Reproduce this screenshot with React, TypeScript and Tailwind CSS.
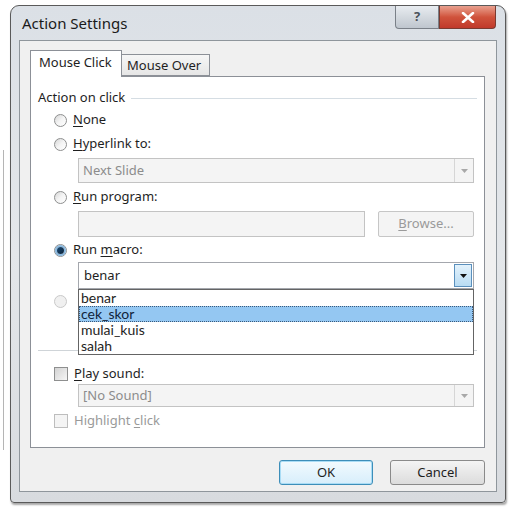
import React from "react";

function Radio({ checked = false, faded = false }: { checked?: boolean; faded?: boolean }) {
  return (
    <span
      className={
        "w-[13px] h-[13px] rounded-full border flex items-center justify-center shrink-0 " +
        (faded
          ? "border-[#c9c9c9] bg-[#f0f0f0]"
          : "border-[#8e8f8f] bg-gradient-to-br from-[#d6d6d6] via-[#f4f4f4] to-[#ffffff]")
      }
    >
      {checked && (
        <span className="w-[7px] h-[7px] rounded-full bg-gradient-to-br from-[#1a4c78] to-[#0b2238] ring-2 ring-[#8ab8de]" />
      )}
    </span>
  );
}

function Check({ disabled = false }: { disabled?: boolean }) {
  return (
    <span
      className={
        "w-[14px] h-[14px] border shrink-0 " +
        (disabled
          ? "border-[#bdbdbd] bg-[#f4f4f4]"
          : "border-[#8e8f8f] bg-gradient-to-br from-[#d3d3d3] to-[#f6f6f6]")
      }
    />
  );
}

function U({ children }: { children: React.ReactNode }) {
  return <span className="underline underline-offset-2">{children}</span>;
}

function DisabledCombo({ text, h }: { text: string; h: string }) {
  return (
    <div className={"ml-[47px] mr-[10px] flex border border-[#c3c3c3] bg-[#f4f4f4] " + h}>
      <span className="flex-1 flex items-center pl-[4px] text-[#8c8c8c]">{text}</span>
      <span className="w-[19px] border-l border-[#d6d6d6] flex items-center justify-center">
        <svg width="7" height="4" viewBox="0 0 7 4">
          <path d="M0 0 L7 0 L3.5 4 Z" fill="#a8a8a8" />
        </svg>
      </span>
    </div>
  );
}

export default function App() {
  const items = ["benar", "cek_skor", "mulai_kuis", "salah"];
  return (
    <div
      className="w-[511px] h-[512px] bg-white relative pt-[5px] pl-[10px] text-[13px] text-[#1e1e1e]"
      style={{ fontFamily: '"Noto Sans", "Open Sans", sans-serif' }}
    >
      {/* faint background edge */}
      <div className="absolute left-[3px] top-[150px] w-px h-[300px] bg-[#b5b5b5]" />

      <div className="w-[496px] h-[498px] rounded-t-[9px] rounded-b-[4px] border border-[#5a5a5a] bg-gradient-to-b from-[#dbe0e6] via-[#e4e7ea] to-[#d8dbdf] shadow-[1px_2px_2px_rgba(0,0,0,0.35)] flex flex-col">
        {/* title bar */}
        <div className="h-[34px] flex items-start shrink-0">
          <span className="pl-[11px] pt-[10px] text-[15px] text-[#1a1a1a] leading-none">Action Settings</span>
          <div className="ml-auto mr-[9px] flex">
            <span className="w-[44px] h-[23px] border border-[#7a8088] border-t-0 rounded-bl-[4px] bg-gradient-to-b from-[#e8ecf0] to-[#bfc6ce] flex items-center justify-center text-[13px] font-bold text-[#4a525a]">
              ?
            </span>
            <span className="w-[57px] h-[23px] border border-[#7a3a30] border-t-0 rounded-br-[4px] bg-gradient-to-b from-[#e8a08f] via-[#d0533c] to-[#c0392a] flex items-center justify-center">
              <svg width="14" height="11" viewBox="0 0 14 11">
                <path d="M2 1 L12 10 M12 1 L2 10" stroke="#ffffff" strokeWidth="2.6" strokeLinecap="round" />
              </svg>
            </span>
          </div>
        </div>

        {/* client area */}
        <div className="mx-[8px] w-[478px] h-[452px] border border-[#8f969c] bg-[#f0f0f0] px-[10px] pt-[9px] flex flex-col">
          {/* tabs */}
          <div className="flex items-end h-[26px] relative z-10">
            <div className="h-[27px] w-[92px] border border-b-0 border-[#8c9097] bg-white pl-[8px] pt-[2px] -mb-px">
              Mouse Click
            </div>
            <div className="h-[22px] w-[88px] border border-l-0 border-[#8c9097] bg-gradient-to-b from-[#f6f6f6] to-[#e6e6e6] pl-[5px] leading-[21px]">
              Mouse Over
            </div>
          </div>

          {/* tab panel */}
          <div className="w-[455px] h-[372px] border border-[#8c9097] bg-white flex flex-col">
            <div className="mt-[11px] h-[20px] flex items-center pl-[7px]">
              <span>Action on click</span>
              <span className="flex-1 h-px bg-[#d5dde3] ml-[6px] mr-[7px]" />
            </div>

            <div className="mt-[2px] h-[20px] flex items-center pl-[23px] gap-[6px]">
              <Radio />
              <span>
                <U>N</U>one
              </span>
            </div>

            <div className="mt-[4px] h-[20px] flex items-center pl-[23px] gap-[6px]">
              <Radio />
              <span>
                <U>H</U>yperlink to:
              </span>
            </div>
            <div className="mt-[4px]">
              <DisabledCombo text="Next Slide" h="h-[25px]" />
            </div>

            <div className="mt-[4px] h-[20px] flex items-center pl-[23px] gap-[6px]">
              <Radio />
              <span>
                <U>R</U>un program:
              </span>
            </div>
            <div className="mt-[4px] h-[26px] flex ml-[47px] mr-[10px] gap-[13px]">
              <span className="w-[287px] border border-[#c3c3c3] bg-[#f4f4f4]" />
              <span className="flex-1 border border-[#c6c6c6] rounded-[2px] bg-[#f4f4f4] flex items-center justify-center text-[#9a9a9a]">
                <U>B</U>rowse...
              </span>
            </div>

            <div className="mt-[3px] h-[20px] flex items-center pl-[23px] gap-[6px]">
              <Radio checked />
              <span>
                Run <U>m</U>acro:
              </span>
            </div>

            <div className="mt-[2px] ml-[47px] mr-[10px] h-[27px] relative z-20">
              <div className="h-full flex border border-[#a4a7ad] bg-white">
                <span className="flex-1 flex items-center pl-[5px]">benar</span>
                <span className="my-[1px] mr-[1px] w-[18px] border border-[#5b90bd] bg-gradient-to-b from-[#e3f2fc] to-[#b9dcf3] flex items-center justify-center">
                  <svg width="7" height="4" viewBox="0 0 7 4">
                    <path d="M0 0 L7 0 L3.5 4 Z" fill="#111111" />
                  </svg>
                </span>
              </div>
              {/* open drop-down list */}
              <div className="absolute left-0 right-0 top-[27px] border border-[#646464] bg-white font-['Lato',sans-serif] text-[14px]">
                {items.map((it) => (
                  <div
                    key={it}
                    className={
                      "h-[16px] leading-[16px] pl-[2px] " +
                      (it === "cek_skor"
                        ? "bg-[#94c7f2] outline-1 outline-dotted outline-[#3c5a7a] -outline-offset-1 text-[#10243a]"
                        : "")
                    }
                  >
                    {it}
                  </div>
                ))}
              </div>
            </div>

            {/* object action row, hidden behind the open list */}
            <div className="mt-[2px] h-[20px] flex items-center pl-[23px]">
              <Radio faded />
            </div>
            <div className="mt-[4px]">
              <DisabledCombo text="" h="h-[25px]" />
            </div>

            <div className="mt-[10px] h-px bg-[#cfd4d8] ml-[7px] mr-[7px]" />

            <div className="mt-[13px] h-[20px] flex items-center pl-[23px] gap-[6px]">
              <Check />
              <span>
                <U>P</U>lay sound:
              </span>
            </div>
            <DisabledCombo text="[No Sound]" h="h-[23px]" />

            <div className="mt-[4px] h-[20px] flex items-center pl-[23px] gap-[6px]">
              <Check disabled />
              <span className="text-[#9a9a9a]">
                Highlight <U>c</U>lick
              </span>
            </div>
          </div>

          {/* buttons */}
          <div className="mt-[12px] flex justify-end gap-[17px] pr-[1px]">
            <button className="w-[94px] h-[25px] rounded-[3px] border border-[#3d8eb9] bg-gradient-to-b from-[#f2fafe] to-[#d7eefb] shadow-[0_0_0_1px_#a9dcf5_inset]">
              OK
            </button>
            <button className="w-[95px] h-[25px] rounded-[3px] border border-[#8a8a8a] bg-gradient-to-b from-[#f4f4f4] to-[#dcdcdc]">
              Cancel
            </button>
          </div>
        </div>
      </div>
    </div>
  );
}
